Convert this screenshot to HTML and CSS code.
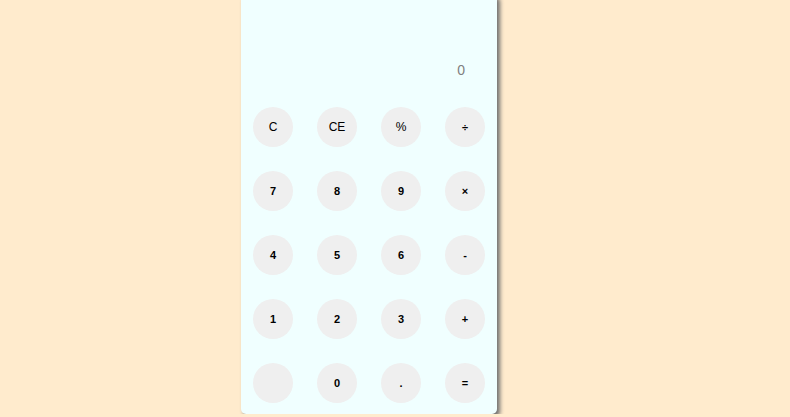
FILE: index.html
```html
<!DOCTYPE html>
<html>
<head>
<meta charset="utf-8">
<link rel="stylesheet" href="styles.css">
</head>
<body>
<div class="calc">
  <div class="display"><span class="value">0</span></div>
  <div class="keys">
    <button class="key fn">C</button>
    <button class="key fn">CE</button>
    <button class="key fn">%</button>
    <button class="key">÷</button>
    <button class="key">7</button>
    <button class="key">8</button>
    <button class="key">9</button>
    <button class="key">×</button>
    <button class="key">4</button>
    <button class="key">5</button>
    <button class="key">6</button>
    <button class="key">-</button>
    <button class="key">1</button>
    <button class="key">2</button>
    <button class="key">3</button>
    <button class="key">+</button>
    <button class="key"></button>
    <button class="key">0</button>
    <button class="key">.</button>
    <button class="key">=</button>
  </div>
</div>
</body>
</html>
```
FILE: styles.css
```css
html, body {
  margin: 0;
  padding: 0;
  background: #ffebcd;
  font-family: "Liberation Sans", Arial, sans-serif;
  overflow: hidden;
}
.calc {
  width: 256px;
  box-sizing: border-box;
  margin: -6px 0 0 241px;
  padding: 6px 12px 11px;
  background: #f0ffff;
  border-radius: 5px;
  box-shadow: 3px 3px 4px #6f6f6f;
}
.display {
  height: 95px;
  box-sizing: border-box;
  padding: 0 20px 17px 0;
  display: flex;
  align-items: flex-end;
  justify-content: flex-end;
}
.value {
  font-size: 14px;
  color: #808080;
  line-height: 16px;
}
.keys {
  margin-top: 12px;
  display: grid;
  grid-template-columns: repeat(4, 40px);
  column-gap: 24px;
  row-gap: 24px;
}
.key {
  width: 40px;
  height: 40px;
  border: none;
  border-radius: 50%;
  background: #efefef;
  padding: 0;
  font-family: "Liberation Sans", Arial, sans-serif;
  font-size: 11px;
  font-weight: bold;
  color: #000;
}
.key.fn {
  font-size: 12px;
  font-weight: normal;
}
```
